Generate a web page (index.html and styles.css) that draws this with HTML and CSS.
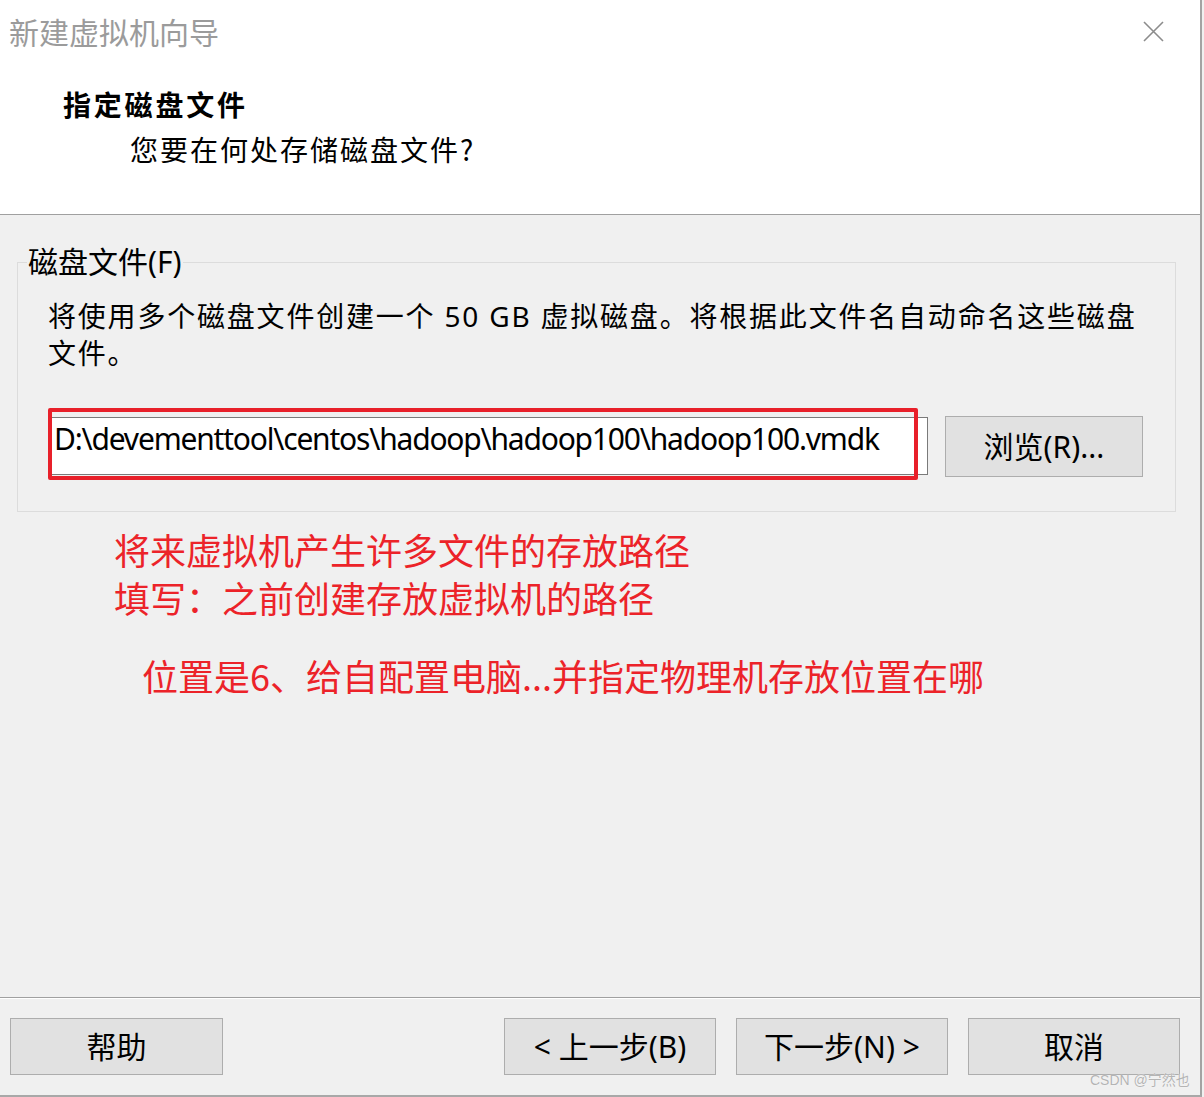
FILE: index.html
```html
<!DOCTYPE html>
<html lang="zh-CN">
<head>
<meta charset="utf-8">
<title>新建虚拟机向导</title>
<link rel="stylesheet" href="styles.css">
</head>
<body>
<div class="window">
  <header class="header">
    <div class="titlebar">
      <span class="title">新建虚拟机向导</span>
      <svg class="close" width="21" height="21" viewBox="0 0 21 21" aria-hidden="true">
        <path d="M1 1 L20 20 M20 1 L1 20" stroke="#8c8c8c" stroke-width="1.6" fill="none"/>
      </svg>
    </div>
    <h1 class="heading">指定磁盘文件</h1>
    <p class="subheading">您要在何处存储磁盘文件?</p>
  </header>
  <main class="main">
    <fieldset class="group">
      <legend class="legend">磁盘文件(F)</legend>
      <div class="group-body">
        <p class="desc">将使用多个磁盘文件创建一个 50 GB 虚拟磁盘。将根据此文件名自动命名这些磁盘文件。</p>
        <div class="path-row">
          <div class="path-wrap">
            <div class="path-input">D:\devementtool\centos\hadoop\hadoop100\hadoop100.vmdk</div>
            <div class="mark"></div>
          </div>
          <button class="btn browse" type="button">浏览(R)...</button>
        </div>
      </div>
    </fieldset>
    <div class="note">
      <p class="note-line">将来虚拟机产生许多文件的存放路径</p>
      <p class="note-line">填写：之前创建存放虚拟机的路径</p>
      <p class="note-line note-indent">位置是6、给自配置电脑...并指定物理机存放位置在哪</p>
    </div>
  </main>
  <footer class="footer">
    <button class="btn fbtn" type="button">帮助</button>
    <div class="nav">
      <button class="btn fbtn" type="button">&lt; 上一步(B)</button>
      <button class="btn fbtn" type="button">下一步(N) &gt;</button>
      <button class="btn fbtn" type="button">取消</button>
    </div>
    <span class="watermark">CSDN @宁然也</span>
  </footer>
</div>
</body>
</html>
```

FILE: styles.css
```css
* { box-sizing: border-box; }
html, body { margin: 0; padding: 0; }
body {
  background: #f0f0f0;
  width: 1204px;
  height: 1097px;
  overflow: hidden;
  font-family: "Noto Sans", "Noto Sans CJK SC", sans-serif;
  color: #000;
}
.window {
  width: 1202px;
  height: 1097px;
  border-right: 2px solid #a3a3a3;
  border-bottom: 2px solid #a8a8a8;
  display: flex;
  flex-direction: column;
  position: relative;
  background: #f0f0f0;
}
.header {
  height: 215px;
  background: #fff;
  border-bottom: 1px solid #a0a0a0;
  flex: none;
}
.titlebar {
  height: 62px;
  display: flex;
  align-items: center;
  padding-left: 9px;
}
.title {
  font-family: "Noto Sans CJK SC", sans-serif;
  font-size: 30px;
  color: #9b9b9b;
  line-height: 36px;
}
.close {
  margin-left: auto;
  margin-right: 36px;
  margin-top: 0;
}
.heading {
  margin: 24px 0 0 0;
  padding-left: 63px;
  font-family: "Noto Sans CJK SC", sans-serif;
  font-size: 28px;
  font-weight: 700;
  line-height: 36px;
  letter-spacing: 2.8px;
}
.subheading {
  margin: 9px 0 0 0;
  padding-left: 130px;
  font-family: "Noto Sans CJK SC", sans-serif;
  font-size: 28px;
  font-weight: 400;
  line-height: 36px;
  letter-spacing: 2px;
}
.main {
  flex: 1;
  padding-top: 29px;
}
.group {
  margin: 0 0 0 17px;
  width: 1159px;
  border: 1px solid #dcdcdc;
  padding: 0;
  min-width: 0;
}
.legend {
  margin-left: 9px;
  padding: 0 1px;
  font-size: 30px;
  line-height: 36px;
}
.group-body {
  padding: 18px 24px 34px 30px;
}
.desc {
  margin: 0;
  font-size: 28px;
  letter-spacing: 1.8px;
  line-height: 37px;
}
.path-row {
  margin-top: 44px;
  display: flex;
  align-items: flex-start;
}
.path-wrap {
  position: relative;
  width: 880px;
  margin-top: 1px;
  flex: none;
}
.path-input {
  height: 58px;
  background: #fff;
  border: 1px solid #7a7a7a;
  padding: 0 0 0 5px;
  font-size: 30px;
  line-height: 42px;
  white-space: nowrap;
  overflow: hidden;
  letter-spacing: -1.2px;
}
.mark {
  position: absolute;
  left: 0;
  top: -9px;
  width: 870px;
  height: 72px;
  border: 4px solid #e8202a;
  border-radius: 2px;
}
.btn {
  font-family: "Noto Sans", "Noto Sans CJK SC", sans-serif;
  font-size: 30px;
  background: #e1e1e1;
  border: 1px solid #adadad;
  color: #000;
  padding: 0;
  margin: 0;
  line-height: 36px;
  display: flex;
  align-items: center;
  justify-content: center;
}
.browse {
  margin-left: 17px;
  width: 198px;
  height: 61px;
}
.note {
  margin-top: 13px;
  color: #ec2329;
  font-family: "Noto Sans CJK SC", sans-serif;
  font-size: 36px;
  line-height: 48px;
}
.note-line {
  margin: 0;
  padding-left: 114px;
}
.note-indent {
  margin-top: 30px;
  padding-left: 142px;
}
.footer {
  flex: none;
  height: 98px;
  border-top: 1px solid #a0a0a0;
  box-shadow: inset 0 1px 0 #fff;
  display: flex;
  align-items: flex-start;
  padding: 20px 20px 0 10px;
  position: relative;
}
.fbtn {
  width: 213px;
  height: 57px;
}
.nav .fbtn {
  width: 212px;
}
.nav {
  margin-left: auto;
  display: flex;
  gap: 20px;
}
.watermark {
  position: absolute;
  left: 1090px;
  top: 74px;
  font-family: "Liberation Sans", "Noto Sans CJK SC", sans-serif;
  font-size: 14px;
  line-height: 16px;
  color: #b4b4b4;
  text-shadow: 0 0 1px #fff;
}
```
